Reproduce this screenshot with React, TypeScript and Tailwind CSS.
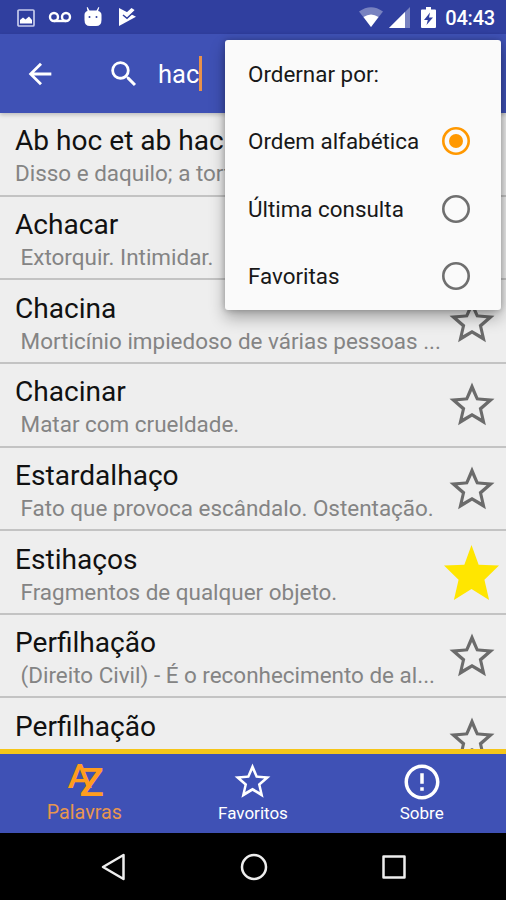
import { MdArrowBack, MdErrorOutline, MdSearch } from 'react-icons/md'

const words = [
  { term: 'Ab hoc et ab hac', meaning: 'Disso e daquilo; a torto e a direito.', starred: false },
  { term: 'Achacar', meaning: ' Extorquir. Intimidar.', starred: false },
  { term: 'Chacina', meaning: ' Morticínio impiedoso de várias pessoas ...', starred: false },
  { term: 'Chacinar', meaning: ' Matar com crueldade.', starred: false },
  { term: 'Estardalhaço', meaning: ' Fato que provoca escândalo. Ostentação.', starred: false },
  { term: 'Estihaços', meaning: ' Fragmentos de qualquer objeto.', starred: true },
  { term: 'Perfilhação', meaning: ' (Direito Civil) - É o reconhecimento de al...', starred: false },
  { term: 'Perfilhação', meaning: ' ', starred: false },
]

const sortOptions = ['Ordem alfabética', 'Última consulta', 'Favoritas']

function Star({ filled }: { filled: boolean }) {
  if (filled) {
    return (
      <svg viewBox="2 2 20 19" preserveAspectRatio="none" className="w-14 h-[55px] text-[#ffe600]">
        <path fill="currentColor" d="M12 2l2.600 6.800 7.400.3-5.300 4.900L18.400 21 12 17.200 5.600 21l1.700-7L2 9.100l7.400-.3z" />
      </svg>
    )
  }
  return <StarOutline className="w-[54px] h-[54px] text-[#6b6b6b]" />
}

function StarOutline({ className }: { className: string }) {
  return (
    <svg viewBox="0 0 24 24" className={className}>
      <path
        fill="currentColor"
        d="M22 9.240l-7.190-.620L12 2 9.190 8.630 2 9.240l5.460 4.730L5.820 21 12 17.270 18.180 21l-1.630-7.030L22 9.240zM12 15.500l-4.050 2.430 1.050-4.600-3.500-3.050 4.650-.4L12 5.750l1.850 4.130 4.650.4-3.500 3.050 1.050 4.600L12 15.500z"
      />
    </svg>
  )
}

function StatusBar() {
  return (
    <div className="h-[34px] shrink-0 bg-[#303f9f] flex items-center justify-between pl-[17px] pr-[11px] text-white">
      <div className="flex items-center">
        {/* Screenshot saved */}
        <svg viewBox="0 0 18 18" className="w-[18px] h-[18px] mt-px text-[#c5caec]">
          <rect x="1" y="1" width="16" height="16" rx="1" fill="none" stroke="currentColor" strokeWidth="1.7" />
          <path fill="#fff" d="M3 14.5V11l3-2.5 2.5 2L12 7.500l3 3.500v3.500z" />
        </svg>
        {/* Voicemail */}
        <svg viewBox="0 0 24 12" className="w-6 h-3 ml-[13px]" fill="none" stroke="currentColor" strokeWidth="2.400">
          <circle cx="6" cy="6" r="4" />
          <circle cx="18" cy="6" r="4" />
          <path d="M6 10h12" />
        </svg>
        {/* Android head */}
        <svg viewBox="0 0 18 20" className="w-[18px] h-5 ml-[12px] -mt-px">
          <path fill="#fff" d="M3.500 0l2 3.600h7l2-3.600.8.500-1.200 3.600Q17.500 5 17.500 8v5q0 6-5.500 6H6q-5.500 0-5.500-6V8q0-3 3-3.900L2.700.5z" />
          <circle cx="5.500" cy="10" r="1" fill="#303f9f" />
          <circle cx="12.500" cy="10" r="1" fill="#303f9f" />
        </svg>
        {/* Play store update */}
        <svg viewBox="0 0 19 20" className="w-[19px] h-5 ml-4">
          <path fill="#fff" d="M1 1l17 8.700L1 19z" />
          <path fill="#fff" d="M8 6l5.500-5 3 2L12 9z" />
          <path d="M5 8l4 3.300 7-6.500" fill="none" stroke="#303f9f" strokeWidth="1.500" />
        </svg>
      </div>
      <div className="flex items-center">
        <svg viewBox="0 0 24 20" className="w-6 h-5">
          <path fill="#fff" fillOpacity=".35" d="M12 20L0 4.500Q12-4 24 4.500z" />
          <path fill="#fff" d="M12 20L4.500 10Q12 5 19.500 10z" />
        </svg>
        <svg viewBox="0 0 21 21" className="w-[21px] h-[21px] ml-[6px]">
          <path fill="#fff" fillOpacity=".35" d="M21 0v21H0z" />
          <path fill="#fff" d="M16 5v16H0z" />
        </svg>
        <svg viewBox="0 0 15 21" className="w-[15px] h-[21px] ml-[11px]">
          <path fill="#fff" d="M5 0h5v2.500h4a1 1 0 011 1V20a1 1 0 01-1 1H1a1 1 0 01-1-1V3.500a1 1 0 011-1h4z" />
          <path fill="#303f9f" d="M9 5.500l-6 7.500h3.800L5.500 18l6.500-7.500H8z" />
        </svg>
        <span className="ml-[9px] text-[20px] leading-none font-medium tracking-[-0.2px] relative top-px">04:43</span>
      </div>
    </div>
  )
}

function SearchBar() {
  return (
    <header className="h-[79px] shrink-0 bg-[#3f51b5] flex items-center text-white relative shadow-[0_2px_4px_rgba(0,0,0,0.2)]">
      <MdArrowBack className="w-[34px] h-[34px] ml-[23px]" />
      <MdSearch className="w-[34px] h-[34px] ml-[50px]" />
      <span className="ml-[17px] pt-[3px] text-[25.5px] leading-none">hac</span>
      <span className="w-[3px] h-[35px] bg-[#e8914a]" />
    </header>
  )
}

function WordList() {
  return (
    <ul className="flex-1 min-h-0 overflow-hidden bg-[#eeeeee]">
      {words.map((word, i) => (
        <li key={i} className="h-[83.65px] flex items-start border-b-2 border-[#c3c3c3]">
          <div className="w-[444px] shrink-0 pl-[15px] pt-[12.4px] whitespace-pre overflow-hidden">
            <div className="text-[28.1px] leading-[32px] text-[#111]">{word.term}</div>
            <div className="text-[22.45px] leading-[33px] text-[#848484]">{word.meaning}</div>
          </div>
          <div className="w-[55px] h-[83px] shrink-0 flex items-center justify-center">
            <Star filled={word.starred} />
          </div>
        </li>
      ))}
    </ul>
  )
}

function SortMenu() {
  return (
    <div className="absolute left-[225px] top-[40px] w-[276px] h-[270px] bg-[#fafafa] rounded-[3px] shadow-[0_8px_16px_rgba(0,0,0,0.3),0_0_6px_rgba(0,0,0,0.25)] text-[22.4px] text-[#181818]">
      <div className="h-[67.5px] pl-[23px] pt-[2px] flex items-center">Ordernar por:</div>
      {sortOptions.map((option, i) => (
        <label key={option} className="h-[67.5px] pl-[23px] pr-[31px] flex items-center justify-between">
          <span className="pt-[2px]">{option}</span>
          <Radio checked={i === 0} />
        </label>
      ))}
    </div>
  )
}

function Radio({ checked }: { checked: boolean }) {
  return (
    <svg viewBox="0 0 28 28" className={checked ? 'w-7 h-7 text-[#ff9800]' : 'w-7 h-7 text-[#6f6f6f]'}>
      <circle cx="14" cy="14" r="12.700" fill="none" stroke="currentColor" strokeWidth="2.600" />
      {checked && <circle cx="14" cy="14" r="7" fill="currentColor" />}
    </svg>
  )
}

function BottomNav() {
  return (
    <nav className="h-[84px] shrink-0 border-t-[5px] border-[#f5c518] bg-[#3f51b5] grid grid-cols-3 text-white">
      <div className="flex flex-col items-center pt-[5px] text-[#ff9d1e]">
        <svg viewBox="0 0 44 44" className="w-11 h-11 -mb-2" fill="currentColor" fontFamily="Roboto" fontWeight="500">
          <text x="5" y="29" fontSize="34" transform="scale(1.08 1)">
            A<tspan dx="-11.500" dy="8" fontSize="38">Z</tspan>
          </text>
        </svg>
        <span className="text-[19.7px] leading-[24px] mt-[6px] text-[#e8964f]">Palavras</span>
      </div>
      <div className="flex flex-col items-center pt-[9px]">
        <StarOutline className="w-[43px] h-[43px] -mt-[3px] -mb-[5px]" />
        <span className="text-[17px] leading-[20px] mt-[5px]">Favoritos</span>
      </div>
      <div className="flex flex-col items-center pt-[7px]">
        <MdErrorOutline className="w-[42px] h-[42px]" />
        <span className="text-[17px] leading-[20px]">Sobre</span>
      </div>
    </nav>
  )
}

function SystemNav() {
  return (
    <div className="h-[67px] shrink-0 bg-black flex items-center justify-between pl-[100px] pr-[99px] text-[#eee]">
      <svg viewBox="0 0 26 28" className="w-[26px] h-7" fill="none" stroke="currentColor" strokeWidth="2.500" strokeLinejoin="round">
        <path d="M23.500 2v24L3 14z" />
      </svg>
      <svg viewBox="0 0 28 28" className="w-7 h-7" fill="none" stroke="currentColor" strokeWidth="2.500">
        <circle cx="14" cy="14" r="12" />
      </svg>
      <svg viewBox="0 0 26 26" className="w-[26px] h-[26px]" fill="none" stroke="currentColor" strokeWidth="2.500" strokeLinejoin="round">
        <path d="M2.500 2.500h21v21h-21z" />
      </svg>
    </div>
  )
}

export default function App() {
  return (
    <div className="relative w-[506px] h-[900px] overflow-hidden flex flex-col font-[Roboto,sans-serif]">
      <StatusBar />
      <SearchBar />
      <WordList />
      <BottomNav />
      <SystemNav />
      <SortMenu />
    </div>
  )
}
